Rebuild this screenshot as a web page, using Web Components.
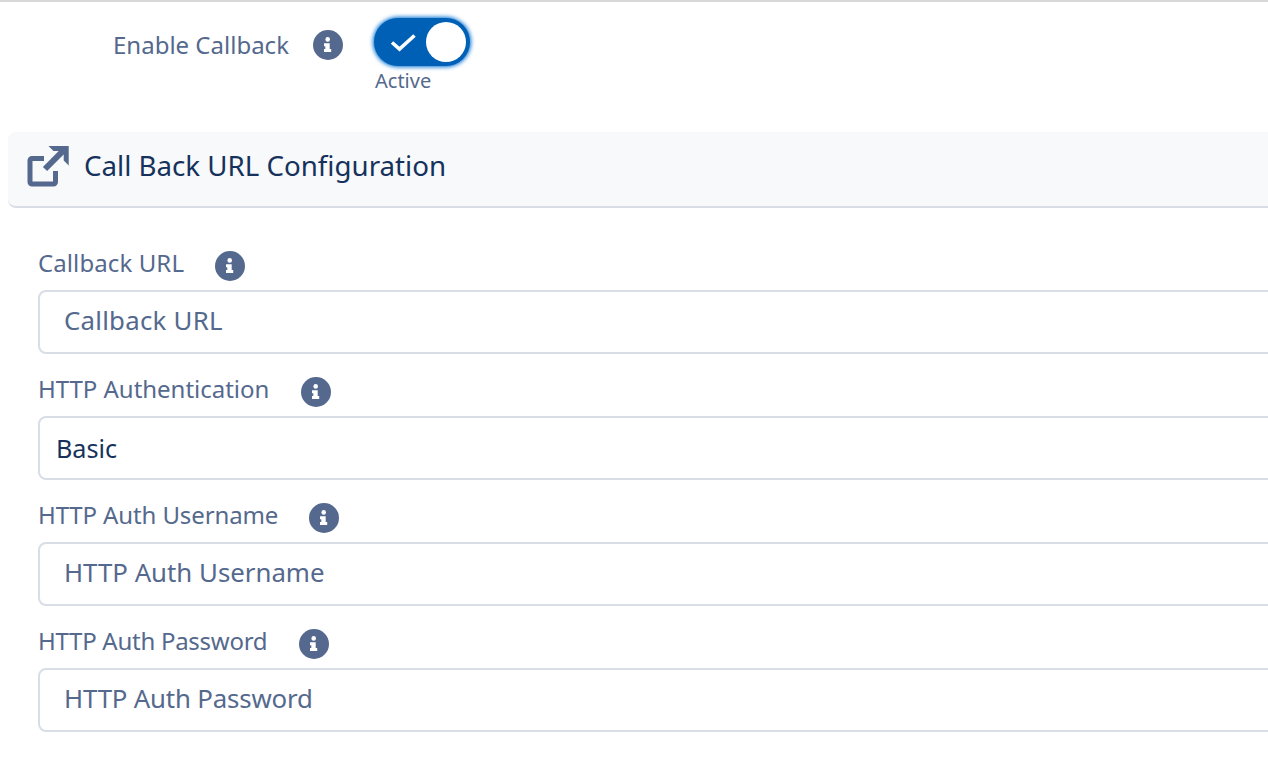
<!DOCTYPE html>
<html><head><meta charset="utf-8"><style>
html,body{margin:0;padding:0;background:#fff;overflow:hidden;height:774px}
body{font-family:"Noto Sans","Open Sans",sans-serif;color:#54698d}
</style></head><body>
<cfg-page>
<cfg-toggle-row label="Enable Callback" status="Active"></cfg-toggle-row>
<cfg-section title="Call Back URL Configuration"></cfg-section>
<cfg-fields>
<cfg-field label="Callback URL" gap="31" ls="0.1" pls="0.25" placeholder="Callback URL"></cfg-field>
<cfg-field label="HTTP Authentication" gap="32" ls="-0.03" value="Basic"></cfg-field>
<cfg-field label="HTTP Auth Username" gap="31" ls="-0.12" placeholder="HTTP Auth Username"></cfg-field>
<cfg-field label="HTTP Auth Password" gap="32" ls="-0.27" pls="-0.17" placeholder="HTTP Auth Password"></cfg-field>
</cfg-fields>
</cfg-page>
<script>
const INFO=`<svg width="30" height="30" viewBox="0 0 30 30" style="display:block"><circle cx="15" cy="15" r="15" fill="#54698d"/><circle cx="14.700" cy="9.400" r="2.300" fill="#fff"/><path d="M11 13.300h5.700v5.800h1.500V22H11v-2.900h1.300v-2.900H11z" fill="#fff"/></svg>`;
customElements.define('cfg-page',class extends HTMLElement{constructor(){super();this.attachShadow({mode:'open'}).innerHTML=`<style>:host{display:flex;flex-direction:column;width:1268px;height:774px;overflow:hidden;border-top:2px solid #d8d8d8;box-sizing:border-box}::slotted(*){flex:none}</style><slot></slot>`}});
customElements.define('cfg-fields',class extends HTMLElement{constructor(){super();this.attachShadow({mode:'open'}).innerHTML=`<style>:host{display:flex;flex-direction:column;gap:23px;padding:43px 0 0 38px}</style><slot></slot>`}});
customElements.define('cfg-info',class extends HTMLElement{constructor(){super();this.attachShadow({mode:'open'}).innerHTML=`<style>:host{display:block;width:30px;height:30px;flex:none}</style>${INFO}`}});
customElements.define('cfg-toggle-row',class extends HTMLElement{connectedCallback(){this.attachShadow({mode:'open'}).innerHTML=`<style>
:host{display:flex;align-items:flex-start;padding:16px 0 0 113px;height:130px;box-sizing:border-box;font-size:24px;color:#54698d}
.l{line-height:28px;margin-top:13px;width:200px}
.i{margin-top:12px;width:61px}
.t{width:96px}
.sw{width:96px;height:48px;border-radius:24px;background:#0060b6;box-sizing:border-box;box-shadow:0 0 4px 1px #0070d2;display:flex;align-items:center;justify-content:space-between;padding:0 4px 0 16px}
.k{width:40px;height:40px;border-radius:50%;background:#fff}
.s{font-size:20px;line-height:26px;margin:2px 0 0 1px}
</style><div class="l">${this.getAttribute('label')}</div><div class="i"><cfg-info></cfg-info></div><div class="t"><div class="sw"><svg width="26" height="20" viewBox="0 0 26 20"><path d="M2 10.500l7.500 6.500L24.500 3.500" fill="none" stroke="#fff" stroke-width="3.600"/></svg><div class="k"></div></div><div class="s">${this.getAttribute('status')}</div></div>`}});
customElements.define('cfg-section',class extends HTMLElement{connectedCallback(){this.attachShadow({mode:'open'}).innerHTML=`<style>
:host{display:flex;align-items:center;margin-left:8px;height:76px;box-sizing:border-box;background:#f7f9fb;border-bottom:2px solid #d8dde6;border-radius:8px 0 0 8px;padding:0 0 8px 19px;gap:15px;font-size:27.700px;color:#16325c}
svg{display:block;flex:none;margin-top:2px}
</style><svg width="42" height="42" viewBox="0 0 42 42"><path d="M17 13.500H5A2 2 0 0 0 3 15.500V37A2 2 0 0 0 5 39H26.500A2 2 0 0 0 28.500 37V26" fill="none" stroke="#54698d" stroke-width="5"/><path d="M18 24L36.300 5.700" fill="none" stroke="#54698d" stroke-width="6"/><path d="M21.500 1H41.700V20.500L36.700 15.500V6H26.500z" fill="#54698d"/></svg><span>${this.getAttribute('title')}</span>`}});
customElements.define('cfg-field',class extends HTMLElement{connectedCallback(){const v=this.getAttribute('value'),p=this.getAttribute('placeholder');this.attachShadow({mode:'open'}).innerHTML=`<style>
:host{display:flex;flex-direction:column;gap:9px;font-size:24px}
.r{display:flex;align-items:center;height:30px;color:#54698d}
.r span{line-height:28px;margin-top:-6px;letter-spacing:${this.getAttribute('ls')||0}px}
.b{height:64px;width:1300px;box-sizing:border-box;border:2px solid #d8dde6;border-radius:8px;display:flex;align-items:center;font-size:25.800px;background:#fff}
.p{padding-left:24px;color:#54698d;margin-top:-4px;letter-spacing:${this.getAttribute('pls')||0}px}.v{padding-left:16px;color:#16325c;font-size:25.200px}
</style><div class="r"><span>${this.getAttribute('label')}</span><cfg-info style="margin-left:${this.getAttribute('gap')}px"></cfg-info></div><div class="b"><span class="${v?'v':'p'}">${v||p}</span></div>`}});
</script></body></html>
